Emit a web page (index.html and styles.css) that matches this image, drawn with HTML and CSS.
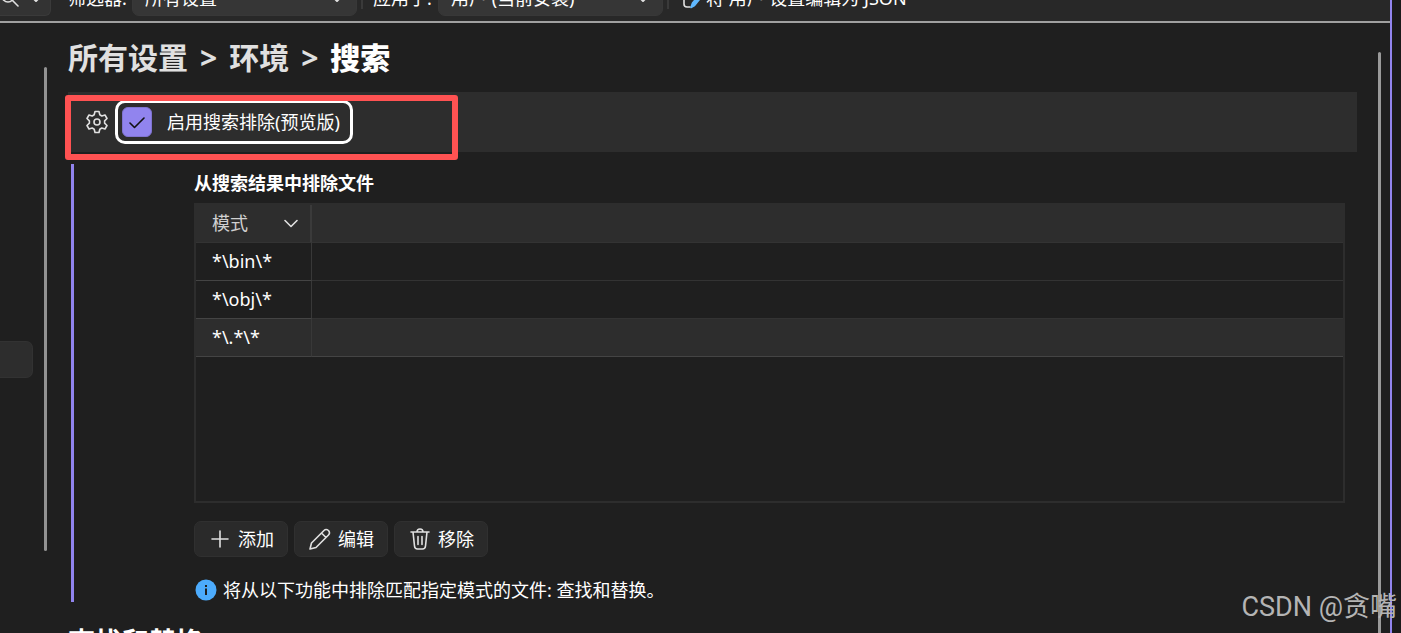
FILE: index.html
```html
<!DOCTYPE html>
<html lang="zh-CN">
<head>
<meta charset="utf-8">
<title>设置 - 搜索</title>
<link rel="stylesheet" href="styles.css">
</head>
<body>
<div class="window">
  <header class="toolbar">
    <button class="search-button" type="button" aria-label="搜索">
      <svg width="20" height="20" viewBox="0 0 20 20"><circle cx="8" cy="8" r="6"/><path d="M12.500 12.500L18 18"/></svg>
      <svg class="caret" width="10" height="8" viewBox="0 0 10 8"><path d="M1 2l4 4 4-4"/></svg>
    </button>
    <label class="filter-label" for="filter">筛选器:</label>
    <span class="picker">
      <select id="filter"><option>所有设置</option></select>
      <svg class="caret" width="10" height="8" viewBox="0 0 10 8"><path d="M1 2l4 4 4-4"/></svg>
    </span>
    <span class="separator"></span>
    <label class="scope-label" for="scope">应用于:</label>
    <span class="picker">
      <select id="scope"><option>用户 (当前安装)</option></select>
      <svg class="caret" width="10" height="8" viewBox="0 0 10 8"><path d="M1 2l4 4 4-4"/></svg>
    </span>
    <span class="separator"></span>
    <button class="json-button" type="button">
      <svg width="20" height="22" viewBox="0 0 20 22"><path d="M9 1H4Q1 1 1 4v13q0 3 3 3h3"/><path class="pen" d="M8 20.500l1.500-4.500L18 6l2 2-8.500 10.500z"/></svg>
      <span>将 用户 设置编辑为 JSON</span>
    </button>
  </header>
  <div class="body">
    <aside class="side">
      <div class="side-item"></div>
      <div class="side-scroll"></div>
    </aside>
    <main class="content">
      <h1 class="crumbs"><a href="#all">所有设置</a><span>&gt;</span><a href="#env">环境</a><span>&gt;</span><b>搜索</b></h1>
      <section class="setting">
        <button class="gear" type="button" aria-label="选项">
          <svg width="22" height="24" viewBox="0 0 22 24"><path d="M9 1.500h4l.8 3.300 2 1.200 3.200-1 2 3.500-2.400 2.300v2.400l2.400 2.300-2 3.500-3.200-1-2 1.200-.8 3.300H9l-.8-3.300-2-1.200-3.200 1-2-3.500 2.400-2.300v-2.400L1 8.500 3 5l3.200 1 2-1.200z"/><circle cx="11" cy="12" r="3"/></svg>
        </button>
        <label class="toggle"><input type="checkbox" checked><svg class="tick" width="16" height="12" viewBox="0 0 16 12"><path d="M1 6l4.500 4.500L15 1"/></svg><span>启用搜索排除(预览版)</span></label>
        <div class="highlight"></div>
      </section>
      <section class="group">
        <h2>从搜索结果中排除文件</h2>
        <div class="table-frame">
          <table>
            <thead><tr><th><div class="head">模式<svg width="14" height="9" viewBox="0 0 14 9"><path d="M1 1.500l6 6 6-6"/></svg></div></th><th></th></tr></thead>
            <tbody>
              <tr><td>*\bin\*</td><td></td></tr>
              <tr><td>*\obj\*</td><td></td></tr>
              <tr class="current"><td>*\.*\*</td><td></td></tr>
            </tbody>
          </table>
        </div>
        <div class="actions">
          <button type="button"><svg width="22" height="22" viewBox="0 0 22 22"><path d="M11 3v16M3 11h16"/></svg>添加</button>
          <button type="button"><svg width="22" height="22" viewBox="0 0 22 22"><path d="M1 21l1.500-6L15 2.500q2-2 4.500 0 2 2.500 0 4.500L7 19.500zM12.500 5l4.500 4.500"/></svg>编辑</button>
          <button type="button"><svg width="22" height="22" viewBox="0 0 22 22"><path d="M2 4h18M4 4l1.500 14q.3 3 3 3h5q2.700 0 3-3L18 4M8 4q0-3 3-3t3 3M9 8.500v8M13 8.500v8"/></svg>移除</button>
        </div>
        <p class="info"><svg width="22" height="22" viewBox="0 0 22 22"><circle cx="11" cy="11" r="10.500"/><path d="M11 6v2M11 9.500v6.500"/></svg>将从以下功能中排除匹配指定模式的文件: 查找和替换。</p>
      </section>
      <h2 class="next-title">查找和替换</h2>
    </main>
    <div class="main-scroll"></div>
  </div>
</div>
<div class="watermark">CSDN @贪嘴</div>
</body>
</html>
```
FILE: styles.css
```css
* { box-sizing: border-box; }

body {
  margin: 0;
  height: 100vh;
  overflow: hidden;
  padding-right: 9px;
  background: #1b1b1b;
  color: #fff;
  font: 18px/24px "Noto Sans", "Noto Sans CJK SC", sans-serif;
}

button, select, input { font: inherit; color: inherit; margin: 0; }
h1, h2, p { margin: 0; }
svg { flex: none; fill: none; stroke: #e0e0e0; stroke-width: 1.6; stroke-linejoin: round; stroke-linecap: round; }

.window {
  height: 100%;
  display: flex;
  flex-direction: column;
  background: #1f1f1f;
  border-right: 2px solid #9184ee;
}

.toolbar {
  flex: none;
  height: 23px;
  padding-bottom: 5px;
  display: flex;
  align-items: flex-end;
  overflow: hidden;
  white-space: nowrap;
  background: #282828;
  border-bottom: 2px solid #a0a0a0;
}

.toolbar > * { flex: none; height: 36px; display: flex; align-items: center; }

.search-button {
  width: 51px;
  padding: 0 9px 0 0;
  justify-content: space-between;
  background: #333;
  border: 1px solid #3a3a3a;
  border-left: 0;
  border-radius: 0 6px 6px 0;
}

.caret { stroke-width: 2; position: relative; top: 1px; }
.filter-label { width: 81px; padding-left: 17px; }
.scope-label { width: 75px; padding-left: 10px; }

.picker { width: 225px; position: relative; }
.picker select {
  width: 100%;
  height: 100%;
  padding: 0 12px;
  appearance: none;
  background: #363636;
  border: 1px solid #383838;
  border-radius: 7px;
}
.picker .caret { position: absolute; right: 15px; top: 15px; pointer-events: none; }

.toolbar .separator { width: 2px; height: 28px; margin: 0 0 7px 4px; background: #3a3a3a; }

.json-button { gap: 3px; padding: 0 0 0 14px; background: none; border: 0; }
.json-button .pen { fill: #60b8ff; stroke: #60b8ff; }

.body { flex: 1; min-height: 0; display: flex; }

.side { flex: none; width: 47px; display: flex; justify-content: space-between; }
.side-item { width: 33px; height: 37px; margin-top: 318px; background: #2d2d2d; border: 1px solid #323232; border-left: 0; border-radius: 0 7px 7px 0; }
.side-scroll { width: 3px; height: 484px; margin-top: 44px; background: #929292; border-radius: 2px; }
.main-scroll { flex: none; width: 3px; margin: 29px 9px 0 0; background: #9a9a9a; border-radius: 2px 2px 0 0; }

.content { flex: 1; min-width: 0; padding: 15px 21px 0; }

.crumbs { display: flex; gap: 12px; height: 40px; font-size: 30px; line-height: 40px; font-weight: 700; color: #e0e0e0; }
.crumbs a { color: inherit; text-decoration: none; }
.crumbs b { color: #fff; }

.setting { position: relative; display: flex; height: 60px; margin-top: 14px; padding: 8px 18px; background: #2d2d2d; }
.gear { padding: 0; height: 44px; border: 0; background: none; display: flex; align-items: center; }
.toggle { position: relative; height: 44px; margin-left: 7px; padding: 0 10px 0 4px; display: flex; align-items: center; gap: 15px; border: 3px solid #fff; border-radius: 10px; }
.toggle input { width: 30px; height: 30px; appearance: none; background: #9184ee; border: 1px solid #8074d0; border-radius: 6px; }
.toggle .tick { position: absolute; left: 11px; top: 14px; stroke: #111; }
.highlight { position: absolute; left: -3px; top: 3px; width: 393px; height: 65px; border: 6px solid #ff5252; border-radius: 3px; }

.group { margin: 12px 12px 0 3px; padding-left: 120px; height: 438px; border-left: 3px solid #9184ee; }
.group h2 { font-size: 18px; line-height: 24px; padding-top: 7px; }

.table-frame { height: 300px; margin-top: 8px; border: 2px solid #2d2d2d; }
table { width: 100%; border-collapse: separate; border-spacing: 0; table-layout: fixed; }
th, td { height: 38px; padding: 0 16px 1px; text-align: left; line-height: 24px; border-bottom: 1px solid #333; }
th { background: #2d2d2d; font-weight: 400; color: #d0d0d0; }
th:first-child { width: 116px; border-right: 2px solid #3a3a3a; padding-right: 12px; }
td:first-child { border-right: 1px solid #383838; border-bottom-color: #444; }
.current td { background: #2d2d2d; border-bottom-color: #444; }
.head { display: flex; align-items: center; justify-content: space-between; }

.actions { display: flex; gap: 6px; margin-top: 18px; }
.actions button { width: 94px; height: 36px; padding: 0 0 0 14px; display: flex; align-items: center; gap: 7px; background: #2a2a2a; border: 1px solid #303030; border-radius: 7px; }

.info { display: flex; align-items: center; gap: 6px; margin-top: 21px; padding-left: 1px; }
.info svg { fill: #4cabfc; stroke: none; }
.info path { stroke: #1f1f1f; stroke-width: 2; stroke-linecap: butt; }

.next-title { margin-top: 24px; font-size: 27px; line-height: 32px; }

.watermark { position: absolute; right: 4px; bottom: 10px; font: 27px/32px Roboto, "Noto Sans CJK SC", sans-serif; color: #b4b4b4; }
```
